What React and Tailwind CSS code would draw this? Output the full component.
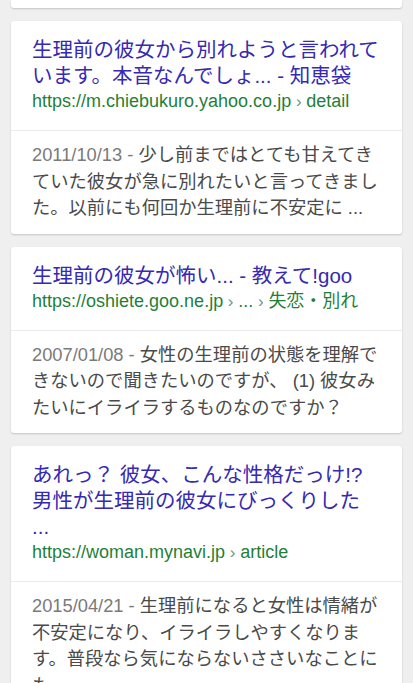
import React from "react";

const font = { fontFamily: '"Liberation Sans", "Noto Sans CJK JP", sans-serif' };

function Card({ title, url, date, snippet }) {
  return (
    <div className="bg-white rounded-[3px] shadow-[0_1px_2px_rgba(0,0,0,0.18)]">
      <div className="px-[21px] pt-[16px] pb-[16px] border-b border-[#ebebeb]">
        <div className="text-[20.5px] leading-[26px] text-[#3629b3] whitespace-nowrap">{title}</div>
        <div className="text-[18px] leading-[24px] text-[#1f7f38] whitespace-nowrap">{url}</div>
      </div>
      <div className="px-[21px] pt-[11px] pb-[12px] text-[18.3px] leading-[26.5px] text-[#4a4a4a] whitespace-nowrap">
        <span className="text-[#7a7a7a]">{date} - </span>
        {snippet}
      </div>
    </div>
  );
}

const Sep = () => <span className="text-[#6a9a74] text-[17px]"> › </span>;

export default function App() {
  return (
    <div className="min-h-[683px] bg-[#efefef] overflow-hidden" style={font}>
      <div className="px-[11px] flex flex-col gap-[13px]">
        <div className="h-[8px] bg-white rounded-b-[3px] shadow-[0_1px_2px_rgba(0,0,0,0.18)]" />
        <Card
          title={<>生理前の彼女から別れようと言われて<br />います。本音なんでしょ... - 知恵袋</>}
          url={<>https://m.chiebukuro.yahoo.co.jp<Sep />detail</>}
          date="2011/10/13"
          snippet={<>少し前まではとても甘えてき<br />ていた彼女が急に別れたいと言ってきまし<br />た。以前にも何回か生理前に不安定に ...</>}
        />
        <Card
          title={<>生理前の彼女が怖い... - 教えて!goo</>}
          url={<>https://oshiete.goo.ne.jp<Sep />...<Sep />失恋・別れ</>}
          date="2007/01/08"
          snippet={<>女性の生理前の状態を理解で<br />きないので聞きたいのですが、 (1) 彼女み<br />たいにイライラするものなのですか？</>}
        />
        <Card
          title={<>あれっ？ 彼女、こんな性格だっけ!?<br />男性が生理前の彼女にびっくりした<br />...</>}
          url={<>https://woman.mynavi.jp<Sep />article</>}
          date="2015/04/21"
          snippet={<>生理前になると女性は情緒が<br />不安定になり、イライラしやすくなりま<br />す。普段なら気にならないささいなことに<br />も ...</>}
        />
      </div>
    </div>
  );
}
